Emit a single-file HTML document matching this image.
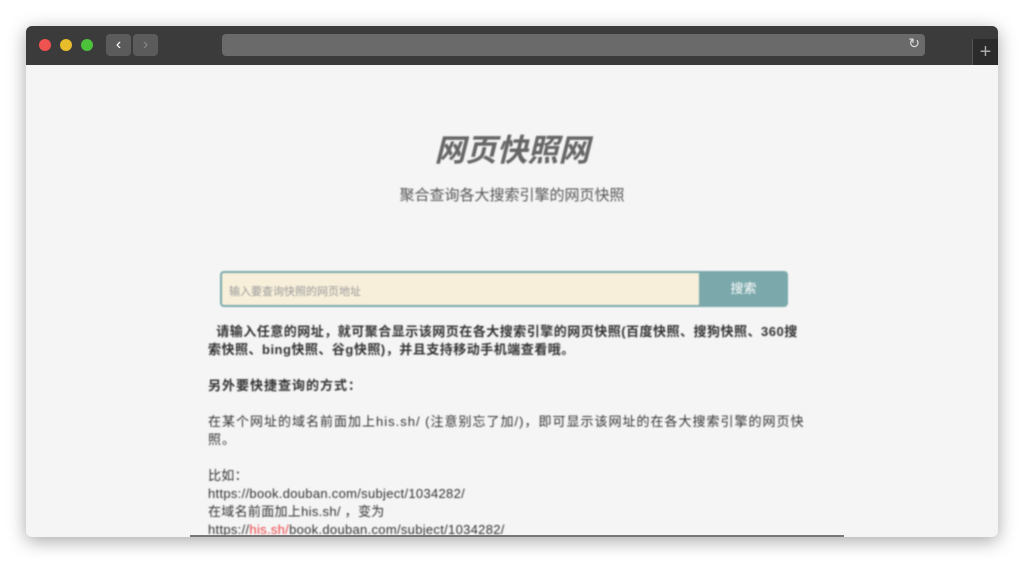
<!DOCTYPE html>
<html><head><meta charset="utf-8"><style>
*{margin:0;padding:0;box-sizing:border-box}
body{width:1024px;height:564px;background:#fff;position:relative;overflow:hidden;font-family:"Liberation Sans","Noto Sans CJK SC",sans-serif}
.win{position:absolute;left:26px;top:26px;width:972px;height:511px;border-radius:6px;overflow:hidden;box-shadow:0 4px 18px rgba(0,0,0,.35);background:#f5f5f5}
.bar{position:absolute;left:0;top:0;width:100%;height:39px;background:#3b3b3b}
.dot{position:absolute;top:13px;width:12px;height:12px;border-radius:50%}
.nav{position:absolute;top:8px;width:25px;height:22px;background:#5b5b5b;border-radius:4px;color:#ddd;font-size:16px;text-align:center;line-height:22px}
.url{position:absolute;left:196px;top:8px;width:703px;height:22px;background:#6a6a6a;border-radius:4px}
.tab{position:absolute;left:946px;top:13px;width:26px;height:26px;background:#2b2b2b;color:#aaa;font-size:20px;text-align:center;line-height:26px;border-left:1px solid #555}
.c{filter:blur(0.9px)}
h1{position:absolute;left:0;width:100%;top:99px;text-align:center;font-size:31px;font-style:italic;font-weight:bold;color:#666}
.sub{position:absolute;left:0;width:100%;top:158px;text-align:center;font-size:15px;color:#555}
.inp{position:absolute;left:194px;top:245px;width:480px;height:36px;background:#f7efda;border:2px solid #7aa8ab;border-right:none;border-radius:4px 0 0 4px;font-size:11px;color:#999;padding:10px 0 0 7px}
.btn{position:absolute;left:673px;top:245px;width:89px;height:36px;background:#7aa8ab;border-radius:0 4px 4px 0;color:#fff;font-size:13px;text-align:center;line-height:36px}
.txt{position:absolute;left:182px;top:297px;width:598px;font-size:13px;line-height:18px;color:#333;letter-spacing:1px}
.bot{position:absolute;left:164px;top:509px;width:654px;height:3px;background:#777}
</style></head><body>
<div class="win">
<div class="bar">
<div class="dot" style="left:13px;background:#f0524f"></div>
<div class="dot" style="left:34px;background:#e7bd2c"></div>
<div class="dot" style="left:55px;background:#4cc13a"></div>
<div class="nav" style="left:80px;color:#fff">‹</div>
<div class="nav" style="left:107px;color:#888">›</div>
<div class="url"><span style="position:absolute;right:5px;top:1px;color:#ddd;font-size:14px">↻</span></div>
<div class="tab">+</div>
</div>
<div class="c">
<h1>网页快照网</h1>
<div class="sub">聚合查询各大搜索引擎的网页快照</div>
<div class="inp">输入要查询快照的网页地址</div>
<div class="btn">搜索</div>
<div class="txt">
<p style="font-weight:bold;letter-spacing:0.5px">&nbsp;&nbsp;请输入任意的网址，就可聚合显示该网页在各大搜索引擎的网页快照(百度快照、搜狗快照、360搜索快照、bing快照、谷g快照)，并且支持移动手机端查看哦。</p><br>
<p style="font-weight:bold">另外要快捷查询的方式：</p><br>
<p>在某个网址的域名前面加上his.sh/ (注意别忘了加/)，即可显示该网址的在各大搜索引擎的网页快照。</p><br>
<p style="letter-spacing:0.3px">比如：<br>https://book.douban.com/subject/1034282/<br>在域名前面加上his.sh/ ，变为<br>https://<span style="color:#e44">his.sh/</span>book.douban.com/subject/1034282/</p>
</div>
</div>
<div class="bot"></div>
</div>
</body></html>
